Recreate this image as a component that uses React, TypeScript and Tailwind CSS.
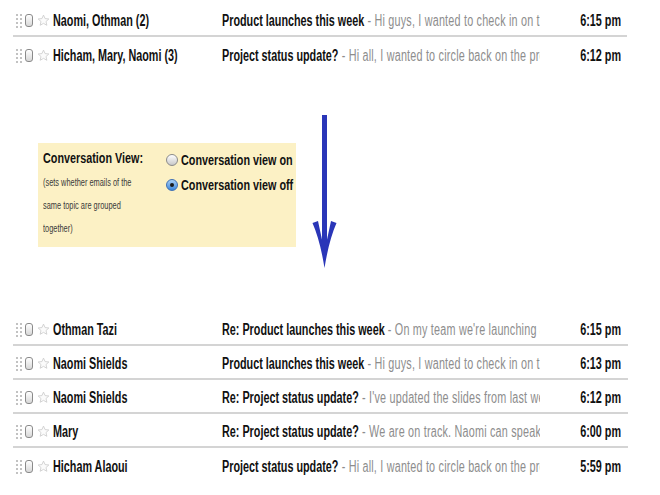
import React from "react";

type Row = { name: string; subject: string; snippet: string; time: string };

const topRows: Row[] = [
  { name: "Naomi, Othman (2)", subject: "Product launches this week", snippet: "Hi guys, I wanted to check in on the launches", time: "6:15 pm" },
  { name: "Hicham, Mary, Naomi (3)", subject: "Project status update?", snippet: "Hi all, I wanted to circle back on the project", time: "6:12 pm" },
];

const bottomRows: Row[] = [
  { name: "Othman Tazi", subject: "Re: Product launches this week", snippet: "On my team we're launching a new", time: "6:15 pm" },
  { name: "Naomi Shields", subject: "Product launches this week", snippet: "Hi guys, I wanted to check in on the launches", time: "6:13 pm" },
  { name: "Naomi Shields", subject: "Re: Project status update?", snippet: "I've updated the slides from last week", time: "6:12 pm" },
  { name: "Mary", subject: "Re: Project status update?", snippet: "We are on track. Naomi can speak to", time: "6:00 pm" },
  { name: "Hicham Alaoui", subject: "Project status update?", snippet: "Hi all, I wanted to circle back on the project", time: "5:59 pm" },
];

function Handle() {
  return (
    <div className="grid grid-cols-2 gap-x-[2px] gap-y-[2px] w-[6px]">
      {Array.from({ length: 8 }).map((_, i) => (
        <div key={i} className="w-[2px] h-[2px] bg-[#c2c2c2]" />
      ))}
    </div>
  );
}

function Checkbox() {
  return <div className="w-[8px] h-[13px] rounded-[3px] border border-[#8a8a8a] bg-gradient-to-b from-white to-[#d8d8d8]" />;
}

function Star() {
  return (
    <svg width="13" height="13" viewBox="0 0 24 24">
      <path
        d="M12 2l2.9 6.5 7 .7-5.3 4.7 1.6 6.9L12 17.3l-6.2 3.5 1.6-6.9-5.3-4.7 7-.7z"
        fill="#fbfbfb"
        stroke="#cdcdcd"
        strokeWidth="1.6"
        strokeLinejoin="round"
      />
    </svg>
  );
}

function MailRow({ row, border }: { row: Row; border: boolean }) {
  return (
    <div
      className={`flex items-center h-[34px] pt-[3px] pl-[3px] ${border ? "border-b-2 border-[#d4d4d4]" : ""}`}
    >
      <Handle />
      <div className="ml-[3px]">
        <Checkbox />
      </div>
      <div className="ml-[4px] flex items-center">
        <Star />
      </div>
      <div className="ml-[3px] w-[169px] whitespace-nowrap">
        <div className="w-[250px] origin-left scale-x-[0.675] font-bold text-[#111]">{row.name}</div>
      </div>
      <div className="w-[318px] whitespace-nowrap overflow-hidden">
        <div className="w-[471px] overflow-hidden origin-left scale-x-[0.675]">
          <span className="font-bold text-[#111]">{row.subject}</span>
          <span className="text-[#8d8d8d] tracking-[0.3px]"> - {row.snippet}</span>
        </div>
      </div>
      <div className="w-[81px] flex justify-end whitespace-nowrap">
        <div className="w-[120px] shrink-0 text-right origin-right scale-x-[0.675] font-bold text-[#111]">{row.time}</div>
      </div>
    </div>
  );
}

function Radio({ checked }: { checked: boolean }) {
  if (checked) {
    return (
      <div className="w-[12px] h-[12px] shrink-0 rounded-full border border-[#3d6fb5] bg-gradient-to-b from-[#a9d0f5] to-[#3a87dc] flex items-center justify-center">
        <div className="w-[4px] h-[4px] rounded-full bg-[#1a1a1a]" />
      </div>
    );
  }
  return <div className="w-[12px] h-[12px] shrink-0 rounded-full border border-[#8a8a8a] bg-gradient-to-b from-white to-[#c9c9c9]" />;
}

export default function App() {
  return (
    <div
      className="w-[660px] h-[495px] bg-white overflow-hidden text-[16px]"
      style={{ fontFamily: '"Liberation Sans", Arial, sans-serif' }}
    >
      <div className="ml-[13px] w-[614px] pt-[3px]">
        {topRows.map((r, i) => (
          <MailRow key={i} row={r} border={i === 0} />
        ))}
      </div>

      <div className="flex h-[241px]">
        <div className="ml-[38px] mt-[72px] w-[258px] h-[104px] bg-[#fcf1c5] flex pl-[5px] pt-[6px]">
          <div className="w-[123px] whitespace-nowrap">
            <div className="w-[170px] origin-left scale-x-[0.72] font-bold text-[#111] text-[15px] leading-[18px]">
              Conversation View:
            </div>
            <div className="w-[160px] origin-left scale-x-[0.74] text-[10px] text-[#3a3a3a] leading-[23px] mt-[4px]">
              (sets whether emails of the
              <br />
              same topic are grouped
              <br />
              together)
            </div>
          </div>
          <div className="flex flex-col gap-[8px] pt-[2px] whitespace-nowrap">
            <div className="flex items-center gap-[3px] h-[17px]">
              <Radio checked={false} />
              <span className="inline-block w-[170px] origin-left scale-x-[0.72] font-bold text-[#111] text-[15px] leading-[17px]">
                Conversation view on
              </span>
            </div>
            <div className="flex items-center gap-[3px] h-[17px]">
              <Radio checked={true} />
              <span className="inline-block w-[170px] origin-left scale-x-[0.72] font-bold text-[#111] text-[15px] leading-[17px]">
                Conversation view off
              </span>
            </div>
          </div>
        </div>
        <div className="ml-[14px] mt-[44px]">
          <svg width="30" height="155" viewBox="0 0 30 155">
            <rect x="12" y="0" width="5" height="136" fill="#2a36b8" />
            <path d="M2.5 108 L8 106 L12.5 127 L16.5 127 L21 106 L26.5 108 Q19 125 14.5 153 Q10 125 2.5 108 Z" fill="#2a36b8" />
          </svg>
        </div>
      </div>

      <div className="ml-[13px] w-[615px]">
        {bottomRows.map((r, i) => (
          <MailRow key={i} row={r} border={i < bottomRows.length - 1} />
        ))}
      </div>
    </div>
  );
}
